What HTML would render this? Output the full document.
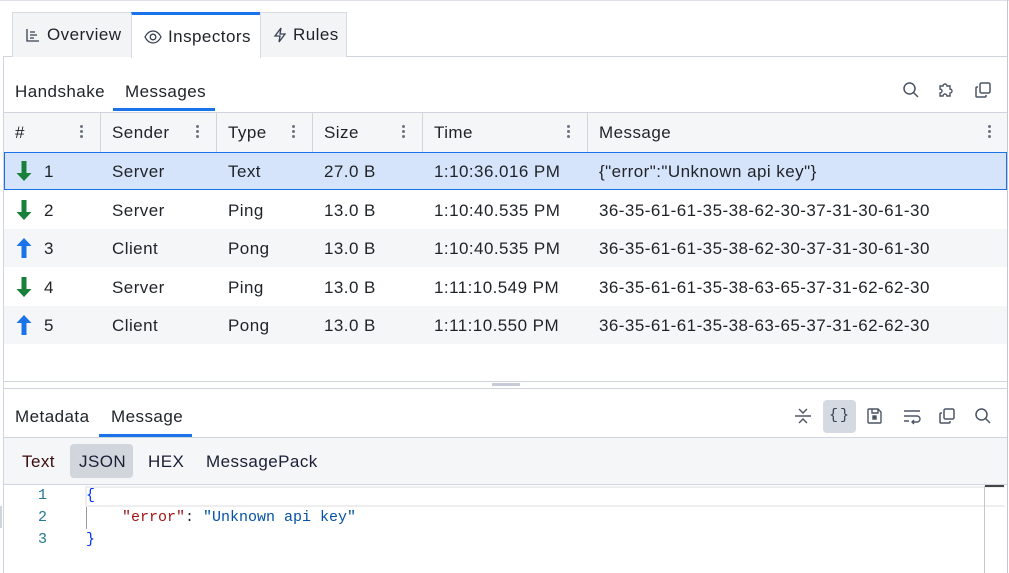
<!DOCTYPE html>
<html><head><meta charset="utf-8"><style>
*{box-sizing:border-box;margin:0;padding:0}
body{width:1009px;height:573px;overflow:hidden;background:#fff;font-family:"Liberation Sans",sans-serif;font-size:17px;letter-spacing:0.45px;color:#1f2328;position:relative}
.a{position:absolute}
.hl{position:absolute;height:1px;background:#d0d4dc}
.vl{position:absolute;width:1px;background:#d0d4dc}
.tab{position:absolute;top:12px;height:45px;background:#f3f4f6;border:1px solid #d8dbe1;border-bottom:none;display:flex;align-items:center;padding-left:12px;gap:6px;font-size:17px}
.cell{position:absolute;font-size:17px;white-space:nowrap}
.dots{position:absolute;width:3px}
.dots i{display:block;width:3px;height:3px;border-radius:50%;background:#6b7280;margin-bottom:2px}
.code{font-family:"Liberation Mono","DejaVu Sans Mono",monospace;font-size:15px;letter-spacing:0}
svg{display:block}
</style></head><body>
<div class="hl" style="top:0;left:0;width:1009px;background:#dde0e6"></div>
<div class="vl" style="left:3px;top:56px;height:517px;background:#d0d4dc"></div>
<div class="vl" style="left:1007px;top:0;height:573px;background:#c4c8d0"></div>

<!-- top tabs -->
<div class="tab" style="left:12px;width:120px"><svg width="16" height="16" viewBox="0 0 16 16" fill="none" stroke="#374151" stroke-width="1.3"><path d="M2 2v12h12M5 5h5M5 8h7M5 11h4"/></svg>Overview</div>
<div class="tab" style="left:131px;width:130px;background:#fff;border-top:3px solid #1a73e8;height:46px"><svg width="18" height="16" viewBox="0 0 18 16" fill="none" stroke="#374151" stroke-width="1.3"><path d="M1 8c2-4 5-6 8-6s6 2 8 6c-2 4-5 6-8 6s-6-2-8-6z"/><circle cx="9" cy="8" r="2.8"/></svg>Inspectors</div>
<div class="tab" style="left:260px;width:87px"><svg width="14" height="16" viewBox="0 0 14 16" fill="none" stroke="#374151" stroke-width="1.3"><path d="M8 1L2 9h5l-1 6 6-8H7z"/></svg>Rules</div>
<div class="hl" style="top:56px;left:346px;width:661px"></div>
<div class="hl" style="top:56px;left:3px;width:9px"></div>

<!-- subtabs -->
<div class="cell" style="left:15px;top:82px">Handshake</div>
<div class="cell" style="left:125px;top:82px">Messages</div>
<div class="a" style="left:113px;top:108px;width:102px;height:3px;background:#1a73e8"></div>
<svg class="a" style="left:902px;top:81px" width="18" height="18" viewBox="0 0 18 18" fill="none" stroke="#4b5563" stroke-width="1.5"><circle cx="7.5" cy="7.5" r="5.5"/><path d="M11.5 11.5L16 16"/></svg>
<svg class="a" style="left:937px;top:81px" width="18" height="18" viewBox="0 0 18 18" fill="none" stroke="#4b5563" stroke-width="1.4"><path d="M3 5h3a2 2 0 1 1 4 0h3v3a2 2 0 1 1 0 4v3h-3a2 2 0 1 0-4 0H3v-3a2 2 0 1 0 0-4z"/></svg>
<svg class="a" style="left:974px;top:81px" width="18" height="18" viewBox="0 0 18 18" fill="none" stroke="#4b5563" stroke-width="1.5"><rect x="6" y="2" width="10" height="10" rx="1.5"/><path d="M4 6H3a1 1 0 0 0-1 1v8a1 1 0 0 0 1 1h8a1 1 0 0 0 1-1v-1"/></svg>

<!-- table header -->
<div class="a" style="left:4px;top:113px;width:1003px;height:39px;background:#f5f6f8"></div>
<div class="hl" style="top:112px;left:4px;width:1003px"></div>
<div class="hl" style="top:152px;left:4px;width:1003px"></div>
<div class="vl" style="left:100px;top:113px;height:39px"></div>
<div class="vl" style="left:216px;top:113px;height:39px"></div>
<div class="vl" style="left:312px;top:113px;height:39px"></div>
<div class="vl" style="left:422px;top:113px;height:39px"></div>
<div class="vl" style="left:587px;top:113px;height:39px"></div>
<div class="cell" style="left:15px;top:123px">#</div>
<div class="cell" style="left:112px;top:123px">Sender</div>
<div class="cell" style="left:228px;top:123px">Type</div>
<div class="cell" style="left:324px;top:123px">Size</div>
<div class="cell" style="left:434px;top:123px">Time</div>
<div class="cell" style="left:599px;top:123px">Message</div>
<div class="dots" style="left:80px;top:125px"><i></i><i></i><i></i></div>
<div class="dots" style="left:196px;top:125px"><i></i><i></i><i></i></div>
<div class="dots" style="left:292px;top:125px"><i></i><i></i><i></i></div>
<div class="dots" style="left:402px;top:125px"><i></i><i></i><i></i></div>
<div class="dots" style="left:567px;top:125px"><i></i><i></i><i></i></div>
<div class="dots" style="left:988px;top:125px"><i></i><i></i><i></i></div>

<!-- rows -->
<div class="a" style="left:4px;top:152px;width:1003px;height:38px;background:#d6e4fb;border:1px solid #1a73e8"></div>
<div class="a" style="left:4px;top:229px;width:1003px;height:38px;background:#f5f6f8"></div>
<div class="a" style="left:4px;top:306px;width:1003px;height:38px;background:#f5f6f8"></div>

<svg class="a" style="left:15px;top:160px" width="18" height="22" viewBox="0 0 18 22"><path d="M6.5 1h5v12h5l-7.5 8-7.5-8h5z" fill="#188038"/></svg>
<svg class="a" style="left:15px;top:199px" width="18" height="22" viewBox="0 0 18 22"><path d="M6.5 1h5v12h5l-7.5 8-7.5-8h5z" fill="#188038"/></svg>
<svg class="a" style="left:15px;top:237px" width="18" height="22" viewBox="0 0 18 22"><path d="M6.5 21h5V9h5L9 1 1.5 9h5z" fill="#1a73e8"/></svg>
<svg class="a" style="left:15px;top:276px" width="18" height="22" viewBox="0 0 18 22"><path d="M6.5 1h5v12h5l-7.5 8-7.5-8h5z" fill="#188038"/></svg>
<svg class="a" style="left:15px;top:314px" width="18" height="22" viewBox="0 0 18 22"><path d="M6.5 21h5V9h5L9 1 1.5 9h5z" fill="#1a73e8"/></svg>

<div class="cell" style="left:44px;top:162px">1</div><div class="cell" style="left:112px;top:162px">Server</div><div class="cell" style="left:228px;top:162px">Text</div><div class="cell" style="left:324px;top:162px">27.0 B</div><div class="cell" style="left:434px;top:162px">1:10:36.016 PM</div><div class="cell" style="left:599px;top:162px">{"error":"Unknown api key"}</div>
<div class="cell" style="left:44px;top:201px">2</div><div class="cell" style="left:112px;top:201px">Server</div><div class="cell" style="left:228px;top:201px">Ping</div><div class="cell" style="left:324px;top:201px">13.0 B</div><div class="cell" style="left:434px;top:201px">1:10:40.535 PM</div><div class="cell" style="left:599px;top:201px">36-35-61-61-35-38-62-30-37-31-30-61-30</div>
<div class="cell" style="left:44px;top:239px">3</div><div class="cell" style="left:112px;top:239px">Client</div><div class="cell" style="left:228px;top:239px">Pong</div><div class="cell" style="left:324px;top:239px">13.0 B</div><div class="cell" style="left:434px;top:239px">1:10:40.535 PM</div><div class="cell" style="left:599px;top:239px">36-35-61-61-35-38-62-30-37-31-30-61-30</div>
<div class="cell" style="left:44px;top:278px">4</div><div class="cell" style="left:112px;top:278px">Server</div><div class="cell" style="left:228px;top:278px">Ping</div><div class="cell" style="left:324px;top:278px">13.0 B</div><div class="cell" style="left:434px;top:278px">1:11:10.549 PM</div><div class="cell" style="left:599px;top:278px">36-35-61-61-35-38-63-65-37-31-62-62-30</div>
<div class="cell" style="left:44px;top:316px">5</div><div class="cell" style="left:112px;top:316px">Client</div><div class="cell" style="left:228px;top:316px">Pong</div><div class="cell" style="left:324px;top:316px">13.0 B</div><div class="cell" style="left:434px;top:316px">1:11:10.550 PM</div><div class="cell" style="left:599px;top:316px">36-35-61-61-35-38-63-65-37-31-62-62-30</div>

<!-- splitter -->
<div class="hl" style="top:381px;left:4px;width:1003px"></div>
<div class="a" style="left:492px;top:383px;width:28px;height:3px;background:#c8ccd6"></div>
<div class="hl" style="top:388px;left:4px;width:1003px"></div>

<!-- lower tabs -->
<div class="cell" style="left:15px;top:407px">Metadata</div>
<div class="cell" style="left:111px;top:407px">Message</div>
<div class="a" style="left:99px;top:434px;width:93px;height:3px;background:#1a73e8"></div>
<svg class="a" style="left:794px;top:407px" width="18" height="18" viewBox="0 0 18 18" fill="none" stroke="#4b5563" stroke-width="1.4"><path d="M1 9h16M5 2l4 4 4-4M5 16l4-4 4 4"/></svg>
<div class="a" style="left:823px;top:400px;width:33px;height:33px;background:#d5d9e2;border-radius:4px"></div>
<div class="a code" style="left:829px;top:407px;font-size:15px;color:#374151;letter-spacing:2px">{}</div>
<svg class="a" style="left:866px;top:407px" width="18" height="18" viewBox="0 0 18 18" fill="none" stroke="#4b5563" stroke-width="1.4"><path d="M3 2h9l3 3v10a1 1 0 0 1-1 1H3a1 1 0 0 1-1-1V3a1 1 0 0 1 1-1zM6 2v4h6V2"/><rect x="7" y="9" width="3" height="3" fill="#4b5563"/></svg>
<svg class="a" style="left:902px;top:407px" width="20" height="18" viewBox="0 0 20 18" fill="none" stroke="#4b5563" stroke-width="1.4"><path d="M2 4h16M2 9h13a3 3 0 0 1 0 6h-5M12 13l-2 2 2 2M2 14h5"/></svg>
<svg class="a" style="left:938px;top:407px" width="18" height="18" viewBox="0 0 18 18" fill="none" stroke="#4b5563" stroke-width="1.5"><rect x="6" y="2" width="10" height="10" rx="1.5"/><path d="M4 6H3a1 1 0 0 0-1 1v8a1 1 0 0 0 1 1h8a1 1 0 0 0 1-1v-1"/></svg>
<svg class="a" style="left:974px;top:407px" width="18" height="18" viewBox="0 0 18 18" fill="none" stroke="#4b5563" stroke-width="1.5"><circle cx="7.5" cy="7.5" r="5.5"/><path d="M11.5 11.5L16 16"/></svg>

<!-- format bar -->
<div class="hl" style="top:437px;left:4px;width:1003px"></div>
<div class="a" style="left:4px;top:438px;width:1003px;height:47px;background:#f5f6f8"></div>
<div class="hl" style="top:484px;left:4px;width:1003px"></div>
<div class="a" style="left:70px;top:444px;width:63px;height:34px;background:#d1d5dc;border-radius:4px"></div>
<div class="cell" style="left:22px;top:452px;color:#3b0d0d">Text</div>
<div class="cell" style="left:79px;top:452px;color:#1a1f36">JSON</div>
<div class="cell" style="left:148px;top:452px;color:#1a1f36">HEX</div>
<div class="cell" style="left:206px;top:452px;color:#1a1f36">MessagePack</div>

<!-- editor -->
<div class="a" style="left:85px;top:486px;width:920px;height:21px;border:2px solid #eeeeee;border-right:none"></div>
<div class="vl" style="left:984px;top:486px;height:87px;background:#c4c8d0"></div>
<div class="a" style="left:985px;top:485px;width:19px;height:2px;background:#444"></div>
<div class="vl" style="left:86px;top:507px;height:22px;background:#999"></div>
<div class="a" style="left:0;top:506px;width:2px;height:22px;background:#d0d4dc"></div>
<div class="a code" style="left:38px;top:487px;color:#237893">1</div>
<div class="a code" style="left:38px;top:509px;color:#237893">2</div>
<div class="a code" style="left:38px;top:531px;color:#237893">3</div>
<div class="a code" style="left:86px;top:487px;color:#0431fa">{</div>
<div class="a code" style="left:122px;top:509px;white-space:pre"><span style="color:#a31515">"error"</span>: <span style="color:#0451a5">"Unknown api key"</span></div>
<div class="a code" style="left:86px;top:531px;color:#0431fa">}</div>
</body></html>
